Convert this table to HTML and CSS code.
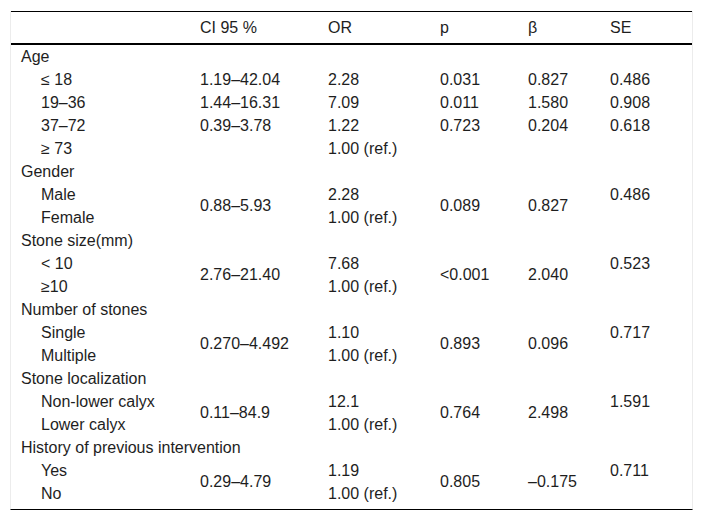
FILE: index.html
```html
<!DOCTYPE html>
<html>
<head>
<meta charset="utf-8">
<link rel="stylesheet" href="styles.css">
</head>
<body>
<div class="frame">
<table class="tbl">
<colgroup>
<col class="c-label"><col class="c-ci"><col class="c-or"><col class="c-p"><col class="c-b"><col class="c-se">
</colgroup>
<thead>
<tr><th></th><th>CI 95 %</th><th>OR</th><th>p</th><th>β</th><th>SE</th></tr>
</thead>
<tbody>
<tr><td>Age</td><td></td><td></td><td></td><td></td><td></td></tr>
<tr><td class="ind">≤ 18</td><td>1.19–42.04</td><td>2.28</td><td>0.031</td><td>0.827</td><td>0.486</td></tr>
<tr><td class="ind">19–36</td><td>1.44–16.31</td><td>7.09</td><td>0.011</td><td>1.580</td><td>0.908</td></tr>
<tr><td class="ind">37–72</td><td>0.39–3.78</td><td>1.22</td><td>0.723</td><td>0.204</td><td>0.618</td></tr>
<tr><td class="ind">≥ 73</td><td></td><td>1.00 (ref.)</td><td></td><td></td><td></td></tr>

<tr><td colspan="6">Gender</td></tr>
<tr><td class="ind">Male</td><td rowspan="2" class="mid">0.88–5.93</td><td>2.28</td><td rowspan="2" class="mid">0.089</td><td rowspan="2" class="mid">0.827</td><td rowspan="2" class="top">0.486</td></tr>
<tr><td class="ind">Female</td><td>1.00 (ref.)</td></tr>

<tr><td colspan="6">Stone size(mm)</td></tr>
<tr><td class="ind">&lt; 10</td><td rowspan="2" class="mid">2.76–21.40</td><td>7.68</td><td rowspan="2" class="mid">&lt;0.001</td><td rowspan="2" class="mid">2.040</td><td rowspan="2" class="top">0.523</td></tr>
<tr><td class="ind">≥10</td><td>1.00 (ref.)</td></tr>

<tr><td colspan="6">Number of stones</td></tr>
<tr><td class="ind">Single</td><td rowspan="2" class="mid">0.270–4.492</td><td>1.10</td><td rowspan="2" class="mid">0.893</td><td rowspan="2" class="mid">0.096</td><td rowspan="2" class="top">0.717</td></tr>
<tr><td class="ind">Multiple</td><td>1.00 (ref.)</td></tr>

<tr><td colspan="6">Stone localization</td></tr>
<tr><td class="ind">Non-lower calyx</td><td rowspan="2" class="mid">0.11–84.9</td><td>12.1</td><td rowspan="2" class="mid">0.764</td><td rowspan="2" class="mid">2.498</td><td rowspan="2" class="top">1.591</td></tr>
<tr><td class="ind">Lower calyx</td><td>1.00 (ref.)</td></tr>

<tr><td colspan="6">History of previous intervention</td></tr>
<tr><td class="ind">Yes</td><td rowspan="2" class="mid">0.29–4.79</td><td>1.19</td><td rowspan="2" class="mid">0.805</td><td rowspan="2" class="mid">–0.175</td><td rowspan="2" class="top">0.711</td></tr>
<tr><td class="ind">No</td><td>1.00 (ref.)</td></tr>
</tbody>
</table>
</div>
</body>
</html>
```

FILE: styles.css
```css
html, body {
  margin: 0;
  padding: 0;
  background: #fff;
}

body {
  font-family: "Liberation Sans", Arial, sans-serif;
  font-size: 16px;
  color: #1e1e1e;
}

.frame {
  margin: 11px 10px 0 10px;
  width: 681px;
  border-left: 1px solid #ececec;
  border-right: 1px solid #ececec;
  border-bottom: 1px solid #000;
  padding-bottom: 4px;
}

.tbl {
  width: 681px;
  border-collapse: collapse;
  table-layout: fixed;
  border-top: 1px solid #000;
}

.c-label { width: 179px; }
.c-ci { width: 128px; }
.c-or { width: 112px; }
.c-p { width: 88px; }
.c-b { width: 82px; }
.c-se { width: 92px; }

.tbl th {
  font-weight: normal;
  text-align: left;
  height: 31px;
  padding: 0 0 0 10px;
  border-bottom: 2px solid #000;
  line-height: 31px;
}

.tbl td {
  text-align: left;
  padding: 0 0 0 10px;
  height: 23px;
  line-height: 23px;
  white-space: nowrap;
}

.tbl td.ind {
  padding-left: 30px;
}

.tbl td.mid {
  vertical-align: middle;
  line-height: 20px;
}

.tbl td.top {
  vertical-align: top;
}
```
